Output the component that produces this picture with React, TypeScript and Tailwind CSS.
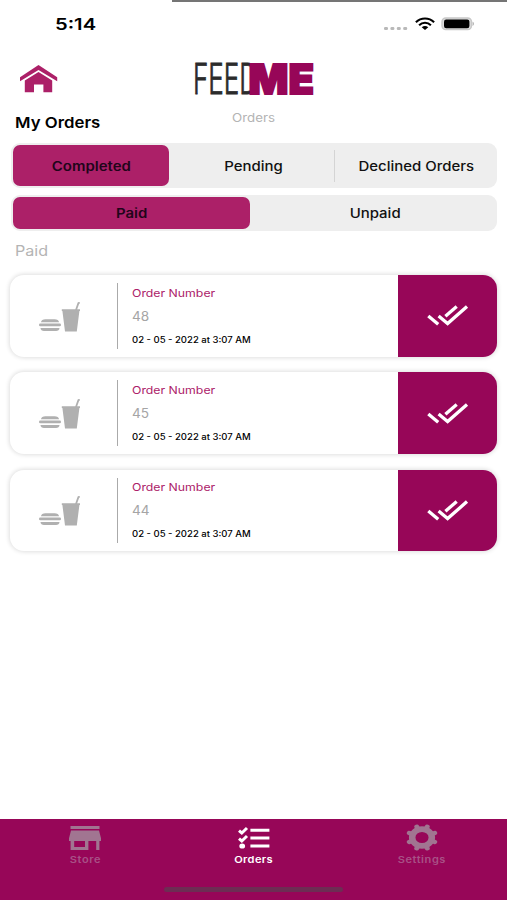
import React from 'react';
import clsx from 'clsx';

const orders = [
  { id: 1, number: '48', date: '02 - 05 - 2022 at 3:07 AM' },
  { id: 2, number: '45', date: '02 - 05 - 2022 at 3:07 AM' },
  { id: 3, number: '44', date: '02 - 05 - 2022 at 3:07 AM' },
];

interface LabelProps {
  className?: string;
  children: React.ReactNode;
}

// Text is set slightly expanded everywhere in the app
const Label: React.FC<LabelProps> = ({ className, children }) => (
  <span className={clsx('block w-fit whitespace-nowrap', className)}>{children}</span>
);

const StatusBar = () => (
  <div className="h-12 shrink-0 flex flex-col">
    <div className="h-[2px] ml-[172px] bg-[#757575]" />
    <div className="flex items-start justify-between pl-[55px] pr-[32px] pt-[12px]">
      <Label className="text-[16px] leading-[20px] font-semibold origin-left scale-x-[1.26]">5:14</Label>
      <div className="flex items-center pt-[2px]">
        <svg width="24" height="6" viewBox="0 0 24 6" className="mt-[10px]" fill="#b9b9b9">
          <rect x="0" y="1" width="4" height="3" rx="1.3" />
          <rect x="6.4" y="1" width="4" height="3" rx="1.3" />
          <rect x="12.8" y="1" width="4" height="3" rx="1.3" />
          <rect x="19.2" y="1" width="4" height="3" rx="1.3" />
        </svg>
        <svg width="20" height="14" viewBox="0 0 20 14" className="ml-[7px]" fill="none" stroke="#000" strokeWidth="2.1">
          <path d="M0.9 5.2C6 0.2 14 0.2 19.1 5.2" />
          <path d="M4.1 8.2C7.5 4.9 12.5 4.9 15.9 8.2" />
          <path d="M6.7 10.2C8.7 8.6 11.3 8.6 13.3 10.2L10 13Z" fill="#000" stroke="none" />
        </svg>
        <svg width="34" height="14" viewBox="0 0 34 14" className="ml-[6px]">
          <rect x="1" y="1" width="29.5" height="11.6" rx="3.8" fill="#dcdcdc" stroke="#c8c8c8" strokeWidth="1.4" />
          <rect x="3" y="2.6" width="25.4" height="8.6" rx="2.2" fill="#000" />
          <path d="M31.6 4.8c1.7.5 1.7 3.6 0 4.1z" fill="#aaa" />
        </svg>
      </div>
    </div>
  </div>
);

const HomeIcon = () => (
  <svg width="38" height="28" viewBox="0 0 38 28" fill="#ac2068">
    <path d="M18.5 0 37.2 12.2V16.2L18.5 4.9 0 16.2V12.2Z" />
    <path d="M18.5 7 32.2 15.6V27.2H23.4V19.4H14V27.2H4.8V15.6Z" />
  </svg>
);

const Logo = () => (
  <svg width="122" height="36" viewBox="0 0 122 36" className="overflow-visible">
    <text x="0" y="33.3" fontFamily="Inter, sans-serif" fontSize="42" fontWeight="300" fill="#2b2b2b" stroke="#2b2b2b" strokeWidth="0.9" textLength="65" lengthAdjust="spacingAndGlyphs">FEED</text>
    <text x="55.5" y="32.8" fontFamily="Inter, sans-serif" fontSize="41.5" fontWeight="900" fill="#970658" stroke="#970658" strokeWidth="1.9" textLength="65.5" lengthAdjust="spacingAndGlyphs">ME</text>
  </svg>
);

const Header = () => (
  <div className="h-[95px] shrink-0 grid grid-cols-[1fr_122px_1fr]">
    <div className="flex flex-col pl-[15px] pt-[17px]">
      <div className="pl-[5px] h-[28px]"><HomeIcon /></div>
      <Label className="mt-[20px] text-[15px] leading-[20px] font-semibold text-black origin-left scale-x-[1.12]">My Orders</Label>
    </div>
    <div className="flex flex-col items-center pt-[13px]">
      <Logo />
      <Label className="mt-[13px] text-[11.5px] leading-[16px] text-[#b4b4b4] scale-x-[1.16]">Orders</Label>
    </div>
    <div />
  </div>
);

const Tabs = () => (
  <div className="pl-[11px] pr-[10px] shrink-0">
    <div className="h-[45px] rounded-[9px] bg-[#eeeeee] flex items-center p-[2px]">
      <div className="w-[156px] h-[41px] rounded-[7px] bg-[#ac2068] flex items-center justify-center pt-[2px]">
        <Label className="text-[13px] font-semibold text-[#21051a] scale-x-[1.15]">Completed</Label>
      </div>
      <div className="w-[166px] h-[32px] border-r border-[#d4d4d4] flex items-center justify-center pt-[2px]">
        <Label className="ml-[3px] text-[13px] font-medium text-[#111] scale-x-[1.15]">Pending</Label>
      </div>
      <div className="flex-1 flex items-center justify-center pt-[2px]">
        <Label className="ml-[3px] text-[13px] font-medium text-[#111] scale-x-[1.15]">Declined Orders</Label>
      </div>
    </div>
    <div className="mt-[7px] h-[36px] rounded-[9px] bg-[#eeeeee] flex items-center p-[2px]">
      <div className="w-[237px] h-[32px] rounded-[7px] bg-[#ac2068] flex items-center justify-center pt-[2px]">
        <Label className="text-[13px] font-semibold text-[#21051a] scale-x-[1.15]">Paid</Label>
      </div>
      <div className="flex-1 flex items-center justify-center pt-[2px]">
        <Label className="ml-[5px] text-[13px] font-medium text-[#111] scale-x-[1.15]">Unpaid</Label>
      </div>
    </div>
  </div>
);

const MealIcon = () => (
  <svg width="42" height="31" viewBox="0 0 42 31" fill="#b0b0b0">
    <path d="M2 20.2C2 18.2 4 17.2 6.5 17.2H15.5C18 17.2 20 18.2 20 20.2Z" />
    <rect x="0" y="21.6" width="22" height="2.7" rx="1.3" />
    <path d="M1.5 26H20.5C20.5 28 19 29 17 29H5C3 29 1.5 28 1.5 26Z" />
    <path d="M22.8 7.2H41V9H40.4L37.8 29.4H26L23.4 9H22.8Z" />
    <path d="M37 8 39.4 1.2 40.7 .4" fill="none" stroke="#b0b0b0" strokeWidth="1.8" />
  </svg>
);

const DoubleCheckIcon = () => (
  <svg width="42" height="22" viewBox="0 0 42 22" fill="none" stroke="#fff" strokeWidth="3.3">
    <path d="M1.3 11 11.2 19.3" />
    <path d="M11.6 11 20.6 18.6 40 1.6" />
    <path d="M18.4 11.2 29.7 1.6" />
  </svg>
);

const OrderCard: React.FC<{ number: string; date: string }> = ({ number, date }) => (
  <div className="h-[81.5px] rounded-[14px] bg-white overflow-hidden flex shadow-[0_0_4px_1px_rgba(0,0,0,0.13)]">
    <div className="w-[107px] flex items-center pl-[29px] pt-[3px]">
      <MealIcon />
    </div>
    <div className="my-[8px] w-px bg-[#aaaaaa]" />
    <div className="flex-1 pl-[14px] pt-[11.6px]">
      <Label className="text-[10.5px] leading-[14px] text-[#ac2068] origin-left scale-x-[1.17]">Order Number</Label>
      <Label className="mt-[8px] text-[12.5px] leading-[16px] text-[#a5a5a5] origin-left scale-x-[1.09]">{number}</Label>
      <Label className="mt-[9px] text-[8.5px] leading-[12px] font-medium text-black origin-left scale-x-[1.12]">{date}</Label>
    </div>
    <div className="w-[99px] bg-[#970658] flex items-center justify-center pt-px">
      <DoubleCheckIcon />
    </div>
  </div>
);

const StoreIcon = () => (
  <svg width="32" height="25" viewBox="0 0 32 25" fill="#a17591">
    <path d="M1.5 0H30.5V3H1.5Z" />
    <path fillRule="evenodd" d="M2 4.6H30L32 12.2V15H30.4V24H27.2V15H19.4V24H1.6V15H0V12.2ZM5.2 15V21H16V15Z" />
  </svg>
);

const OrdersIcon = () => (
  <svg width="32" height="24" viewBox="0 0 32 24" fill="none" stroke="#fff" strokeWidth="3">
    <path d="M1 4.6 3.8 7 9 2" />
    <path d="M1 12.6 3.8 15 9 10" />
    <path d="M12.4 4.3H31.4M12.4 12.1H31.4M12.4 20H31.4" />
    <ellipse cx="4.2" cy="20" rx="2.9" ry="2.6" fill="#fff" stroke="none" />
  </svg>
);

const SettingsIcon = () => (
  <svg width="32" height="27" viewBox="-16 -13.5 32 27" fill="none" stroke="#a17591">
    <g transform="scale(1.17 1)">
      <circle r="8.4" strokeWidth="5.6" />
      <path d="M9.2 3.8 10.9 4.5M9.2-3.8 10.9-4.5M-9.2 3.8-10.9 4.5M-9.2-3.8-10.9-4.5M3.8 9.2 4.5 10.9M3.8-9.2 4.5-10.9M-3.8 9.2-4.5 10.9M-3.8-9.2-4.5-10.9" strokeWidth="4.2" strokeLinecap="round" />
    </g>
  </svg>
);

const BottomNav = () => (
  <div className="h-[81px] shrink-0 bg-[#970658] flex flex-col">
    <div className="grid grid-cols-3 h-[66px]">
      <div className="flex flex-col items-center pt-[7px]">
        <StoreIcon />
        <Label className="mt-[2px] ml-px text-[9.5px] leading-[14px] font-semibold text-[#a85186] tracking-[0.5px] scale-x-[1.16]">Store</Label>
      </div>
      <div className="flex flex-col items-center pt-[7px]">
        <OrdersIcon />
        <Label className="mt-[3px] text-[9.5px] leading-[14px] font-semibold text-white tracking-[0.3px] scale-x-[1.17]">Orders</Label>
      </div>
      <div className="flex flex-col items-center pt-[5px] pr-[2px]">
        <SettingsIcon />
        <Label className="mt-[2px] text-[9.5px] leading-[14px] font-semibold text-[#a85186] tracking-[0.5px] scale-x-[1.16]">Settings</Label>
      </div>
    </div>
    <div className="mt-[2px] mx-auto w-[179px] h-[5px] rounded-full bg-[#6d2d53]" />
  </div>
);

export default function App() {
  return (
    <div className="w-[507px] h-[900px] bg-white overflow-hidden flex flex-col font-['Inter',sans-serif]">
      <StatusBar />
      <Header />
      <Tabs />
      <Label className="ml-[15px] mt-[10px] text-[14px] leading-[20px] text-[#b4b4b4] origin-left scale-x-[1.15]">Paid</Label>
      <div className="flex-1 mt-[14px] px-[10px] flex flex-col gap-[15.75px]">
        {orders.map((order) => (
          <OrderCard key={order.id} number={order.number} date={order.date} />
        ))}
      </div>
      <BottomNav />
    </div>
  );
}
